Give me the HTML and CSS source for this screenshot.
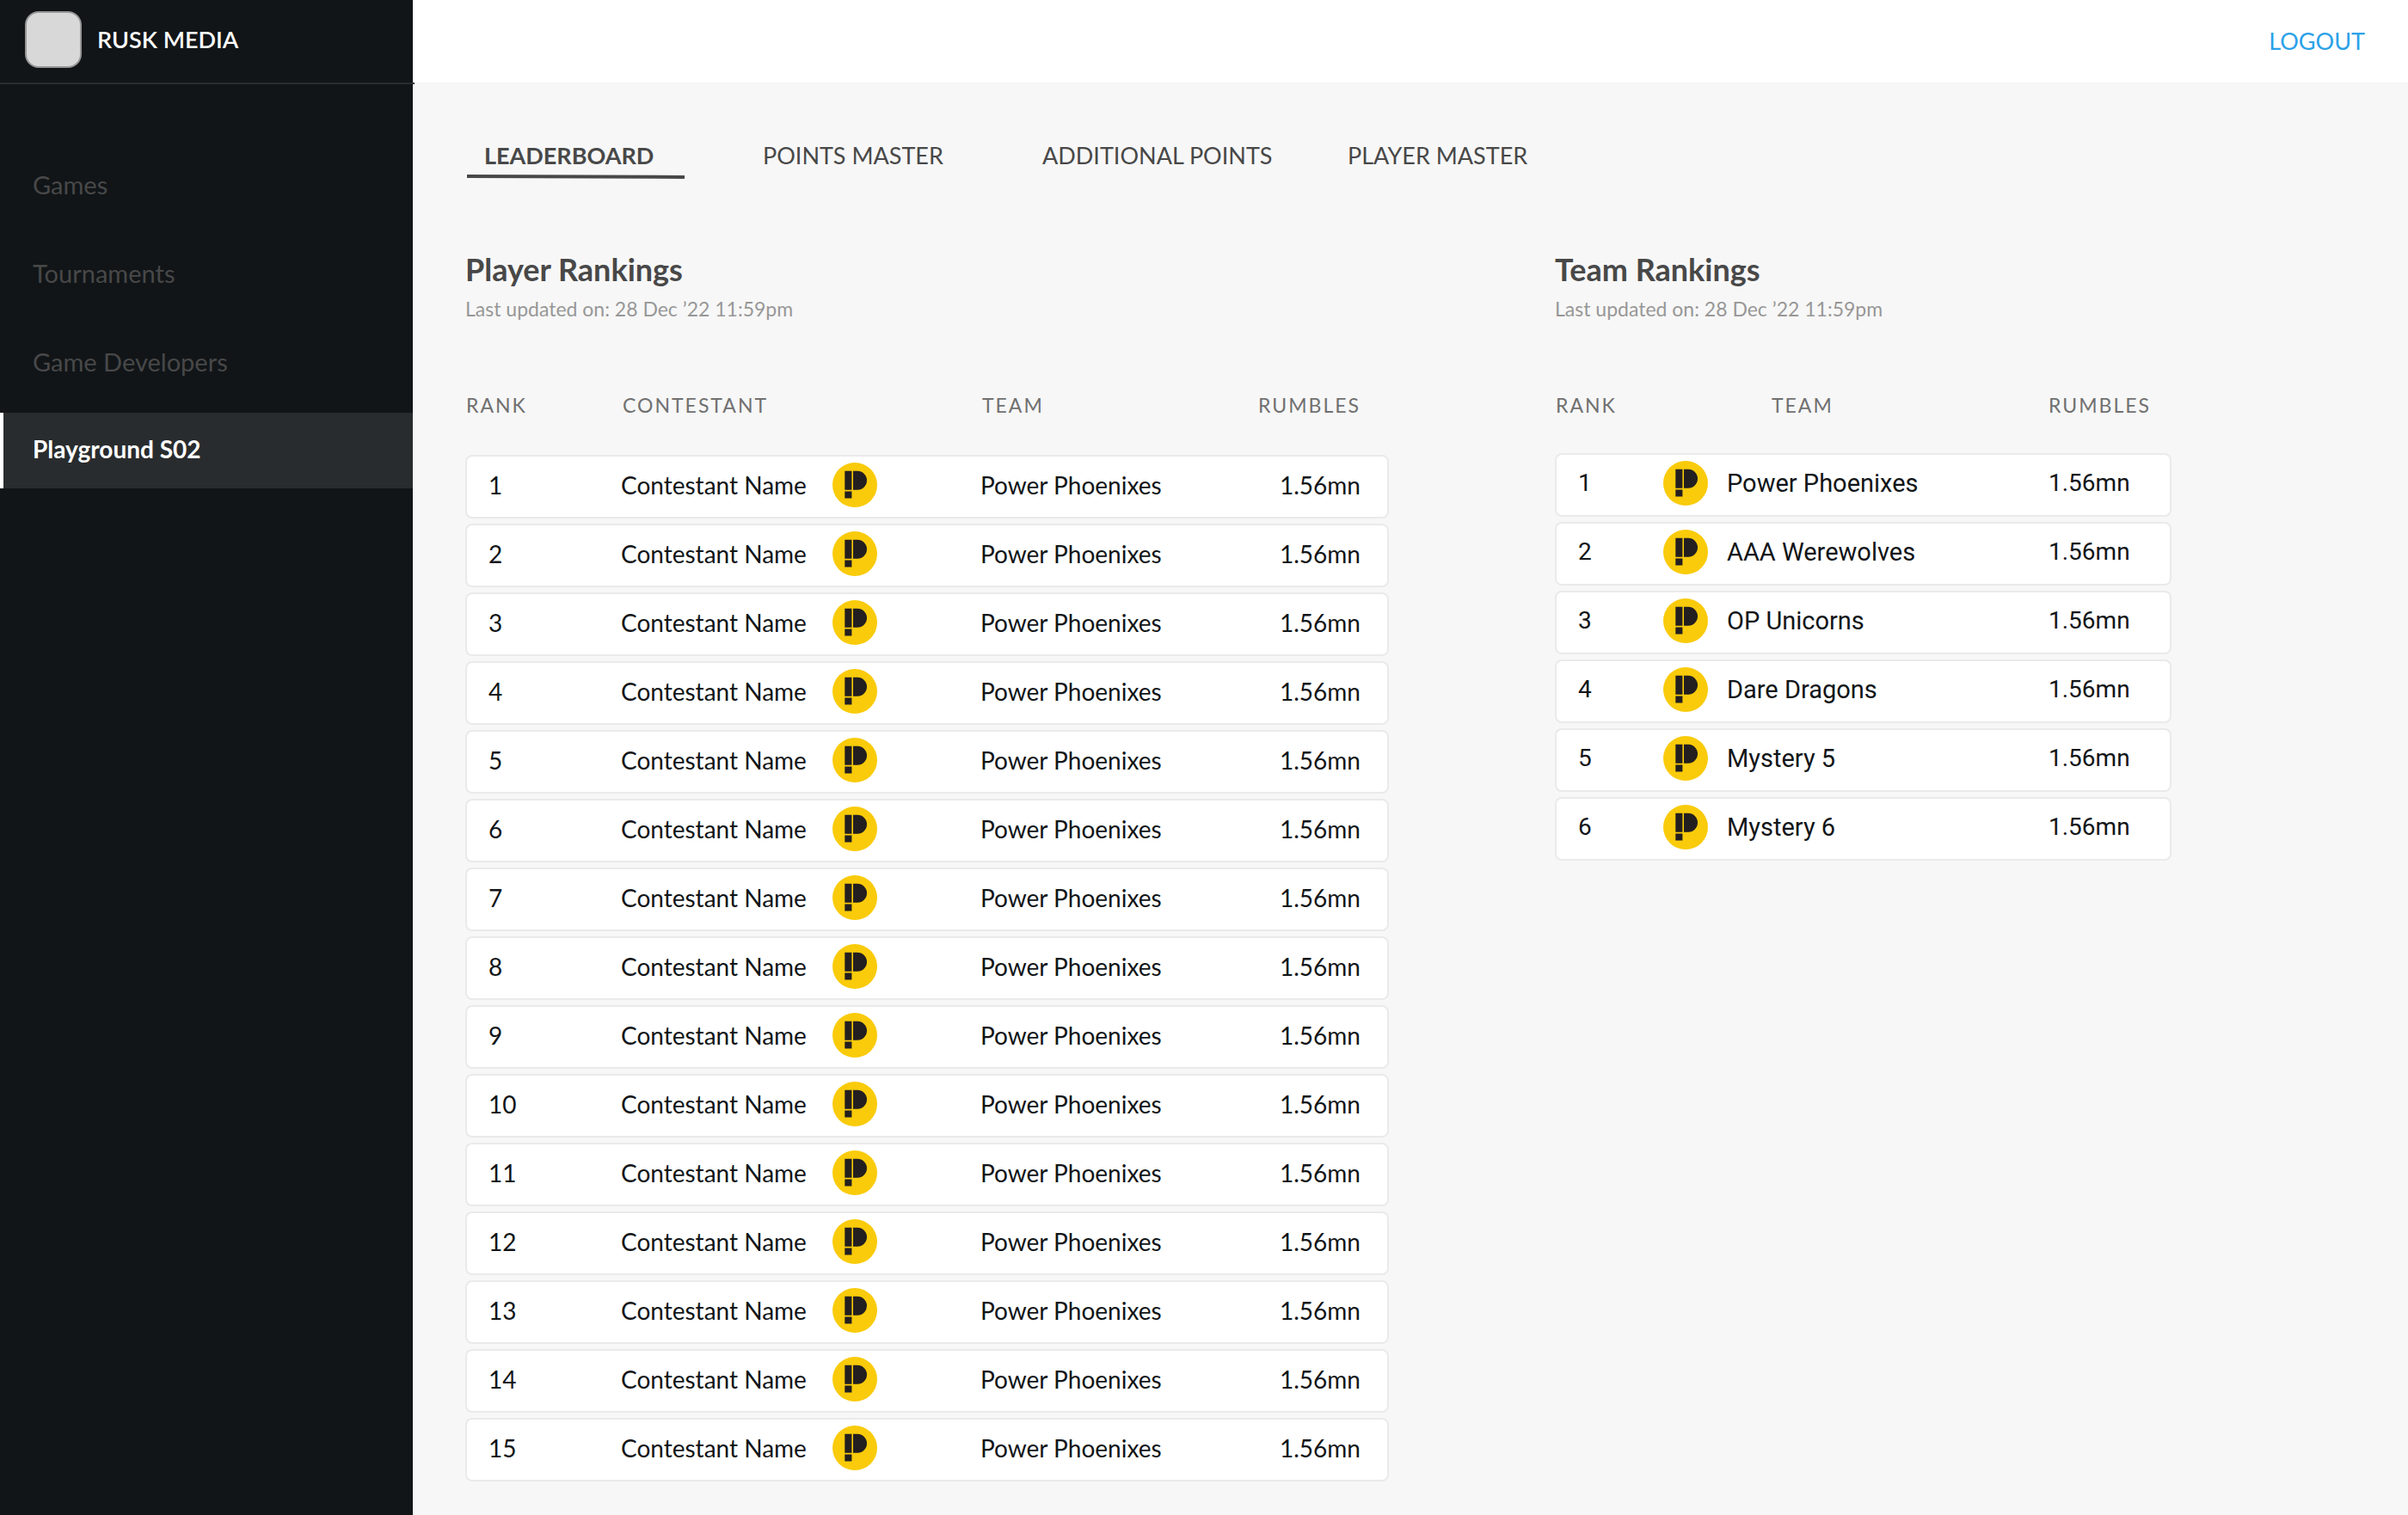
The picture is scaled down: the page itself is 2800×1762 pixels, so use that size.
FILE: index.html
```html
<!DOCTYPE html>
<html lang="en">
<head>
<meta charset="utf-8">
<meta name="viewport" content="width=device-width, initial-scale=1">
<title>Playground S02 – Leaderboard</title>
<link rel="stylesheet" href="styles.css">
</head>
<body>
<svg class="sprite" aria-hidden="true">
  <symbol id="badge" viewBox="0 0 52 52">
    <circle cx="26" cy="26" r="26" fill="#f9cb0a"/>
    <path fill="#231f20" d="M14.3 9.7h8.1v22h-8.1zM24 9.7h5a11 11 0 0 1 0 22h-5zM14.3 33.4h8.1v8h-8.1z"/>
  </symbol>
</svg>
<div class="app">
  <aside class="sidebar">
    <div class="brand">
      <span class="brand-logo"></span>
      <span class="brand-name">RUSK MEDIA</span>
    </div>
    <nav class="side-nav">
      <a class="side-link" href="#games">Games</a>
      <a class="side-link" href="#tournaments">Tournaments</a>
      <a class="side-link" href="#developers">Game Developers</a>
      <a class="side-link active" href="#playground" aria-current="page">Playground S02</a>
    </nav>
  </aside>
  <div class="page">
    <header class="topbar">
      <button class="logout" type="button">LOGOUT</button>
    </header>
    <main class="content">
      <nav class="tabs">
        <a class="tab active" href="#leaderboard">LEADERBOARD
          <svg class="tab-line" viewBox="0 0 253 5" preserveAspectRatio="none" aria-hidden="true"><path d="M0 0L253 1V5L0 4z" fill="#484848"/></svg>
        </a>
        <a class="tab" href="#points">POINTS MASTER</a>
        <a class="tab" href="#additional">ADDITIONAL POINTS</a>
        <a class="tab" href="#players">PLAYER MASTER</a>
      </nav>
      <div class="rankings">
        <section>
          <h2 class="title">Player Rankings</h2>
          <p class="updated">Last updated on: 28 Dec ’22 11:59pm</p>
          <table class="board players">
            <colgroup><col class="p-rank"><col class="p-name"><col><col class="p-score"></colgroup>
            <thead><tr><th>RANK</th><th>CONTESTANT</th><th>TEAM</th><th>RUMBLES</th></tr></thead>
            <tbody>
              <tr><td>1</td><td><div class="who"><span class="name">Contestant Name</span><svg class="badge"><use href="#badge"/></svg></div></td><td>Power Phoenixes</td><td>1.56mn</td></tr>
              <tr><td>2</td><td><div class="who"><span class="name">Contestant Name</span><svg class="badge"><use href="#badge"/></svg></div></td><td>Power Phoenixes</td><td>1.56mn</td></tr>
              <tr><td>3</td><td><div class="who"><span class="name">Contestant Name</span><svg class="badge"><use href="#badge"/></svg></div></td><td>Power Phoenixes</td><td>1.56mn</td></tr>
              <tr><td>4</td><td><div class="who"><span class="name">Contestant Name</span><svg class="badge"><use href="#badge"/></svg></div></td><td>Power Phoenixes</td><td>1.56mn</td></tr>
              <tr><td>5</td><td><div class="who"><span class="name">Contestant Name</span><svg class="badge"><use href="#badge"/></svg></div></td><td>Power Phoenixes</td><td>1.56mn</td></tr>
              <tr><td>6</td><td><div class="who"><span class="name">Contestant Name</span><svg class="badge"><use href="#badge"/></svg></div></td><td>Power Phoenixes</td><td>1.56mn</td></tr>
              <tr><td>7</td><td><div class="who"><span class="name">Contestant Name</span><svg class="badge"><use href="#badge"/></svg></div></td><td>Power Phoenixes</td><td>1.56mn</td></tr>
              <tr><td>8</td><td><div class="who"><span class="name">Contestant Name</span><svg class="badge"><use href="#badge"/></svg></div></td><td>Power Phoenixes</td><td>1.56mn</td></tr>
              <tr><td>9</td><td><div class="who"><span class="name">Contestant Name</span><svg class="badge"><use href="#badge"/></svg></div></td><td>Power Phoenixes</td><td>1.56mn</td></tr>
              <tr><td>10</td><td><div class="who"><span class="name">Contestant Name</span><svg class="badge"><use href="#badge"/></svg></div></td><td>Power Phoenixes</td><td>1.56mn</td></tr>
              <tr><td>11</td><td><div class="who"><span class="name">Contestant Name</span><svg class="badge"><use href="#badge"/></svg></div></td><td>Power Phoenixes</td><td>1.56mn</td></tr>
              <tr><td>12</td><td><div class="who"><span class="name">Contestant Name</span><svg class="badge"><use href="#badge"/></svg></div></td><td>Power Phoenixes</td><td>1.56mn</td></tr>
              <tr><td>13</td><td><div class="who"><span class="name">Contestant Name</span><svg class="badge"><use href="#badge"/></svg></div></td><td>Power Phoenixes</td><td>1.56mn</td></tr>
              <tr><td>14</td><td><div class="who"><span class="name">Contestant Name</span><svg class="badge"><use href="#badge"/></svg></div></td><td>Power Phoenixes</td><td>1.56mn</td></tr>
              <tr><td>15</td><td><div class="who"><span class="name">Contestant Name</span><svg class="badge"><use href="#badge"/></svg></div></td><td>Power Phoenixes</td><td>1.56mn</td></tr>
            </tbody>
          </table>
        </section>
        <section>
          <h2 class="title">Team Rankings</h2>
          <p class="updated">Last updated on: 28 Dec ’22 11:59pm</p>
          <table class="board teams">
            <colgroup><col class="t-rank"><col><col class="t-score"></colgroup>
            <thead><tr><th>RANK</th><th>TEAM</th><th>RUMBLES</th></tr></thead>
            <tbody>
              <tr><td>1</td><td><div class="who"><svg class="badge"><use href="#badge"/></svg><span>Power Phoenixes</span></div></td><td>1.56mn</td></tr>
              <tr><td>2</td><td><div class="who"><svg class="badge"><use href="#badge"/></svg><span>AAA Werewolves</span></div></td><td>1.56mn</td></tr>
              <tr><td>3</td><td><div class="who"><svg class="badge"><use href="#badge"/></svg><span>OP Unicorns</span></div></td><td>1.56mn</td></tr>
              <tr><td>4</td><td><div class="who"><svg class="badge"><use href="#badge"/></svg><span>Dare Dragons</span></div></td><td>1.56mn</td></tr>
              <tr><td>5</td><td><div class="who"><svg class="badge"><use href="#badge"/></svg><span>Mystery 5</span></div></td><td>1.56mn</td></tr>
              <tr><td>6</td><td><div class="who"><svg class="badge"><use href="#badge"/></svg><span>Mystery 6</span></div></td><td>1.56mn</td></tr>
            </tbody>
          </table>
        </section>
      </div>
    </main>
  </div>
</div>
</body>
</html>
```
FILE: styles.css
```css
*{box-sizing:border-box}
body{margin:0;background:#f7f7f7;color:#111518;font-family:Lato,"Open Sans",sans-serif;font-size:28px;line-height:34px}
a{color:inherit;text-decoration:none}
.sprite{display:none}
.app{display:flex;min-height:100vh}

/* Sidebar */
.sidebar{position:relative;z-index:1;flex:none;width:480px;background:#111518}
.brand{display:flex;align-items:center;gap:18px;height:98px;margin-right:-2px;padding:0 29px 4px;border-bottom:2px solid #292c2e}
.brand-logo{width:66px;height:66px;border:2px solid #979797;border-radius:16px;background:#d8d8d8}
.brand-name{color:#fff;font-size:27px;font-weight:600}
.side-nav{display:flex;flex-direction:column;gap:15px;padding-top:73px}
.side-link{display:flex;align-items:center;height:88px;padding:0 34px;border-left:4px solid transparent;color:#484848;font-size:29px}
.side-link.active{padding-bottom:4px;border-left-color:#fff;background:#292c2e;color:#fff;font-size:28px;font-weight:700}

/* Top bar */
.page{flex:1;min-width:0}
.topbar{display:flex;align-items:center;justify-content:flex-end;height:96px;padding:0 50px;background:#fff}
.logout{padding:0;border:0;background:none;color:#2ba1e8;font:27px/34px Lato,"Open Sans",sans-serif;cursor:pointer}

/* Tabs */
.content{padding:68px 275px 36px 61px}
.tabs{display:grid;grid-template-columns:346px 325px 355px auto;height:44px;font-size:27px;color:#484848}
.tab.active{display:flex;flex-direction:column;gap:5px;width:255px;padding-left:22px;font-weight:700}
.tab-line{flex:none;width:253px;height:5px;margin-left:-20px}

/* Ranking boards */
.rankings{display:grid;grid-template-columns:1074fr 717fr;gap:193px;align-items:start;padding-top:83px}
.title{margin:0;color:#484848;font-size:36px;font-weight:700;line-height:44px}
.updated{margin:10px 0 78px;color:#979797;font-size:23px;line-height:28px}
.board{width:100%;table-layout:fixed;border-collapse:separate;border-spacing:0 6px}
.board th{height:66px;padding:0 0 0 2px;color:#707070;font-size:23px;font-weight:400;line-height:28px;letter-spacing:2px;text-align:left;vertical-align:top}
.board th:first-child{padding-left:1px}
.board td{height:74px;padding:0 0 4px;border:solid #eaeaea;border-width:2px 0;background:#fff;vertical-align:middle}
.board td:first-child{padding-left:25px;border-left-width:2px;border-radius:8px 0 0 8px}
.board td:last-child{border-right-width:2px;border-radius:0 8px 8px 0}
.who{display:flex;align-items:center}
.badge{flex:none;width:52px;height:52px}

.p-rank{width:181px}
.p-name{width:418px}
.p-score{width:200px}
.players .name{width:246px}
.players th:last-child{padding-right:33px;text-align:right}
.players td:last-child{padding-right:31px;text-align:right}

.teams{font-family:Roboto,Lato,sans-serif}
.t-rank{width:126px}
.t-score{width:143px}
.teams th{height:64px;font-family:Lato,"Open Sans",sans-serif}
.teams th:nth-child(2){padding-left:126px}
.teams th:last-child{padding-left:0}
.teams .who{gap:22px;font-size:29px}
```
